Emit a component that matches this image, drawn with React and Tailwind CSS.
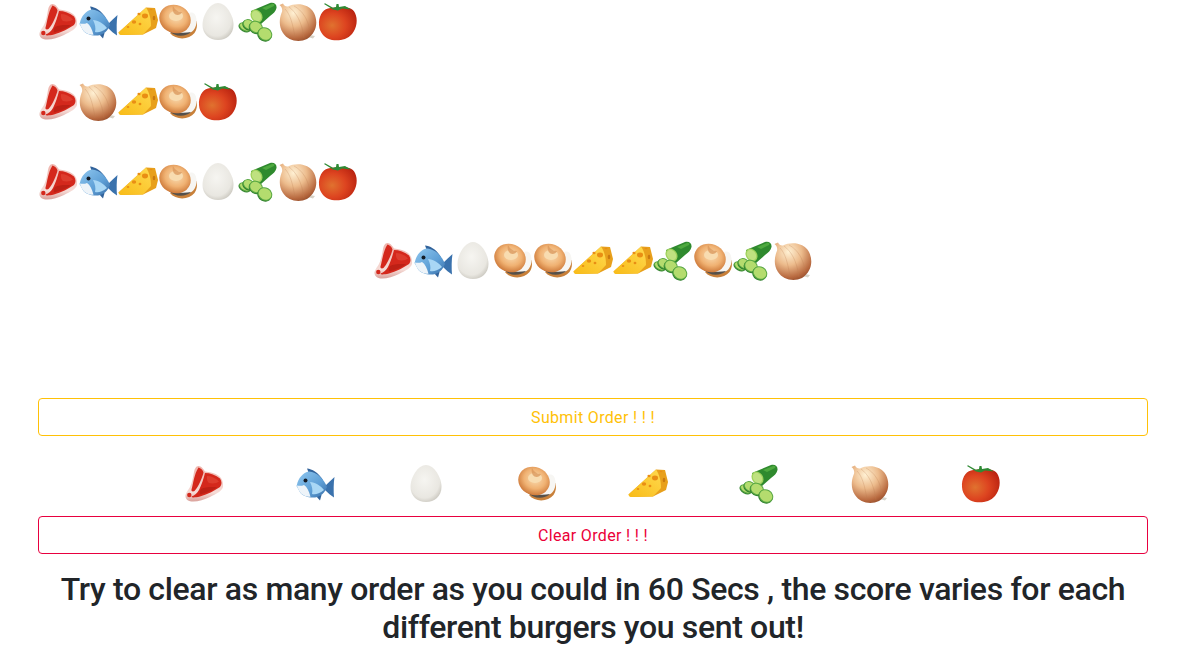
const Svg = ({ children }) => (
  <svg width="40" height="42" viewBox="0 0 40 42" className="block shrink-0">
    {children}
  </svg>
);

const Meat = () => (
  <Svg>
    <defs>
      <linearGradient id="fat" x1="0" y1="0" x2="0" y2="1">
        <stop offset="0" stopColor="#efb4ac" />
        <stop offset="0.75" stopColor="#f6dcd7" />
        <stop offset="1" stopColor="#d9a09a" />
      </linearGradient>
    </defs>
    <path
      d="M14.5 4C17 4 19.5 7 21 9.5C25 10 31 11 35 14C38 16.5 39.5 20 39 25C38 29 32 32 26 35C20 38 13 40 7.5 39.5C3.5 39 1 36.5 1.5 33C2 30 4.5 28 6 25C8 21 9 16 10 10C10.5 7 12 4 14.5 4Z"
      fill="url(#fat)"
    />
    <path d="M14.5 5.5C16.5 6 19 8 19.5 10.5C18.5 15 15 24 10.5 29C9 30 7 29.5 7.5 27.5C9 23 10 12 14.5 5.5Z" fill="#d4281c" />
    <path d="M21 11C26 11 32 13 36 16.5C38 19.5 38 22.5 36 25C31 28.5 24 32 16 34.5C11 35.5 8 36 7.5 34.5C11 33.5 13 31 15 28C17.5 23 19.5 17 21 11Z" fill="#d4281c" />
    <path d="M23 14C27 14 32 16 35 19.5C33 21.5 28 22 25 21C23.5 20 22.5 17 23 14Z" fill="#dd3d2e" />
    <path d="M17 27C21 25 29 24.5 33 25.5C28 29 22 31 16 32.5C15.5 31 16 28 17 27Z" fill="#bd2015" />
    <circle cx="5.3" cy="33" r="2.2" fill="#d4281c" />
  </Svg>
);

const Fish = () => (
  <Svg>
    <defs>
      <linearGradient id="fishBody" x1="0" y1="0" x2="1" y2="1">
        <stop offset="0" stopColor="#8fc7ef" />
        <stop offset="0.6" stopColor="#5e9fd6" />
        <stop offset="1" stopColor="#3a6fa8" />
      </linearGradient>
    </defs>
    <path d="M13 9L12 6.5C17 7 23 10 28 18L14 13Z" fill="#32639b" />
    <path d="M20 33L25 38.5L26.5 33Z" fill="#32639b" />
    <path d="M30 24C33 21 37 17.5 39.5 15C38.5 21 38.5 29 39 35.5C36 33.5 33 31 30 28Z" fill="#3a72ad" />
    <path d="M2 22.5C3 17 8 10 14 9.5C22 10 29 17 32 25C30 30 26 35 20 35.5C14 36 7 34 4.5 29.5C3.5 27 2 25 1.5 24Z" fill="url(#fishBody)" />
    <path d="M2 23.5C4 24 7 24 9 23C12 25 14 29 15.5 34.8C12 35 7 33.5 4.5 29.5C3.5 27 2 25 2 23.5Z" fill="#eef4f9" />
    <path d="M15 20C20 20 26 24 29 28C24 32 20 33 17 32C18 28 17 24 15 20Z" fill="#a9d7f5" />
    <circle cx="10.5" cy="18.5" r="2" fill="#141c26" />
  </Svg>
);

const Cheese = () => (
  <Svg>
    <defs>
      <linearGradient id="cheeseTop" x1="0" y1="1" x2="1" y2="0">
        <stop offset="0" stopColor="#f8bb18" />
        <stop offset="1" stopColor="#ffd94e" />
      </linearGradient>
    </defs>
    <path d="M0.5 32.5L28 7.5L37 8L40 20L38 28L25 34.5L3 35Z" fill="#e8a01c" />
    <path d="M0.5 32.5L28 7.5C31 12 33 18 33 26L25 34.5L3 35C1.5 35 0.5 33.5 0.5 32.5Z" fill="url(#cheeseTop)" />
    <ellipse cx="27" cy="16" rx="3" ry="2.4" fill="#e98e14" />
    <ellipse cx="21" cy="14" rx="1.6" ry="1.2" fill="#e98e14" />
    <ellipse cx="16" cy="22" rx="2.2" ry="1.8" fill="#e98e14" />
    <ellipse cx="22" cy="24" rx="1.4" ry="1.2" fill="#e98e14" />
    <ellipse cx="10" cy="27" rx="1.3" ry="1" fill="#e98e14" />
    <ellipse cx="36" cy="18" rx="1.3" ry="2.2" fill="#c97a10" />
    <ellipse cx="33" cy="9.5" rx="1.5" ry="0.8" fill="#e98e14" />
  </Svg>
);

const Bagel = () => (
  <Svg>
    <defs>
      <radialGradient id="bun" cx="0.5" cy="0.42" r="0.62">
        <stop offset="0" stopColor="#f9dcb2" />
        <stop offset="0.55" stopColor="#f0b273" />
        <stop offset="1" stopColor="#c87030" />
      </radialGradient>
    </defs>
    <path d="M12 33C18 40.5 31 40 36.5 33C39 29.5 39.5 25 38.5 21L24 30Z" fill="#c8803a" />
    <path d="M14 32C21 36.5 32 35 36 29.5C39 25.5 39.5 19 37 14.5C35 12 32 12 30 14L20 27Z" fill="#f7f6f3" />
    <path d="M10 30C16 37 27 37.5 33 32C26 33.5 18 33 10 30Z" fill="#55504a" />
    <ellipse cx="17" cy="19" rx="16" ry="14" transform="rotate(22 17 19)" fill="url(#bun)" />
    <ellipse cx="18" cy="16" rx="7" ry="5" fill="#f8dcb0" />
    <path d="M15 6C17 10 20 12 24 12C23 14.5 20 15.5 17.5 14.5C15 13 14 9 15 6Z" fill="#d9965a" fillOpacity="0.75" />
  </Svg>
);

const Egg = () => (
  <Svg>
    <defs>
      <radialGradient id="egg" cx="0.45" cy="0.4" r="0.7">
        <stop offset="0" stopColor="#f6f5f1" />
        <stop offset="0.7" stopColor="#e9e7e1" />
        <stop offset="1" stopColor="#bfbcb3" />
      </radialGradient>
    </defs>
    <path d="M20 3C28 3 35.5 15 35.5 25C35.5 34 28.5 40 20 40C11.5 40 4.5 34 4.5 25C4.5 15 12 3 20 3Z" fill="url(#egg)" />
  </Svg>
);

const Slice = ({ cx, cy, rx, ry }) => (
  <g>
    <ellipse cx={cx} cy={cy + 1} rx={rx} ry={ry} transform={`rotate(30 ${cx} ${cy})`} fill="#2f7f2c" />
    <ellipse cx={cx} cy={cy} rx={rx} ry={ry} transform={`rotate(30 ${cx} ${cy})`} fill="#5aa845" />
    <ellipse cx={cx} cy={cy} rx={rx - 1} ry={ry - 1} transform={`rotate(30 ${cx} ${cy})`} fill="#b4dc6e" />
  </g>
);

const Cucumber = () => (
  <Svg>
    <path d="M13 11L32 3C36 2 39 4 38.5 8C38 11 35 14 32 16L23 24C18 24 14 18 13 11Z" fill="#2f8a2e" />
    <path d="M24 8L34 4C36 3.5 37 4.5 36 6L28 10Z" fill="#4ea93f" />
    <ellipse cx="18.5" cy="16" rx="5.5" ry="7" transform="rotate(-35 18.5 16)" fill="#9fd25c" />
    <ellipse cx="18.5" cy="16" rx="4.2" ry="5.6" transform="rotate(-35 18.5 16)" fill="#bfe180" />
    <Slice cx={7} cy={27} rx={6.5} ry={4} />
    <Slice cx={11} cy={24.5} rx={6.5} ry={5} />
    <Slice cx={18} cy={27} rx={7} ry={6} />
    <Slice cx={27} cy={34} rx={7.5} ry={6.5} />
  </Svg>
);

const Onion = () => (
  <Svg>
    <defs>
      <radialGradient id="onion" cx="0.38" cy="0.25" r="0.85">
        <stop offset="0" stopColor="#fff1d4" />
        <stop offset="0.42" stopColor="#ecbb8c" />
        <stop offset="0.8" stopColor="#b8693f" />
        <stop offset="1" stopColor="#8a4526" />
      </radialGradient>
    </defs>
    <path d="M30 37L35 38.5L37 36L32 35Z" fill="#d6d2c8" />
    <path d="M1.5 5L5 3.5C6 5.5 8 7 10 6.5C18 2.5 31 3.5 36 13C40.5 22 38.5 33 29 39C21 43 10 41 5 33C1 27 1 20 3.5 13C5 10 4 7 1.5 5Z" fill="url(#onion)" />
    <path d="M7 9C12 14 15 24 17 38M11 7C18 12 24 22 26 38M16 6C24 10 31 20 32 33" stroke="#bd7d50" strokeOpacity="0.3" strokeWidth="0.9" fill="none" />
  </Svg>
);

const Tomato = () => (
  <Svg>
    <defs>
      <radialGradient id="tomato" cx="0.35" cy="0.55" r="0.72">
        <stop offset="0" stopColor="#e0722f" />
        <stop offset="0.5" stopColor="#dd4420" />
        <stop offset="1" stopColor="#b8210f" />
      </radialGradient>
    </defs>
    <path d="M19.5 7.5C26 6.5 34 7 37 13C40 19 39 28 34 34C29 40 21 41 14 40C7 38.5 1.5 33 1 25C0.5 17 4 10 10 8.5C13 7.5 16 7.5 19.5 7.5Z" fill="url(#tomato)" />
    <path d="M6 4L7 3.2L15 7.8L18 7L18.5 4L20.5 4L21 7L27 6L33 9.5L24 8.5L20 10.5L15 9.5Z" fill="#2f8a34" />
  </Svg>
);

const items = {
  meat: Meat,
  fish: Fish,
  cheese: Cheese,
  bagel: Bagel,
  egg: Egg,
  cucumber: Cucumber,
  onion: Onion,
  tomato: Tomato,
};

const orders = [
  ["meat", "fish", "cheese", "bagel", "egg", "cucumber", "onion", "tomato"],
  ["meat", "onion", "cheese", "bagel", "tomato"],
  ["meat", "fish", "cheese", "bagel", "egg", "cucumber", "onion", "tomato"],
];

const current = ["meat", "fish", "egg", "bagel", "bagel", "cheese", "cheese", "cucumber", "bagel", "cucumber", "onion"];

const picker = ["meat", "fish", "egg", "bagel", "cheese", "cucumber", "onion", "tomato"];

function Row({ names, className }) {
  return (
    <div className={className}>
      {names.map((name, i) => {
        const Icon = items[name];
        return <Icon key={i} />;
      })}
    </div>
  );
}

export default function App() {
  return (
    <div className="bg-white min-h-[669px] overflow-hidden font-['Roboto',sans-serif] text-[#212529]">
      <div className="w-[1110px] ml-[38px]">
        <Row names={orders[0]} className="flex h-20" />
        <Row names={orders[1]} className="flex h-20" />
        <Row names={orders[2]} className="flex h-[79px]" />
        <Row names={current} className="flex justify-center h-[159px]" />
        <button className="block w-full h-[38px] pt-px rounded border border-[#ffc107] text-[#ffc107] text-base tracking-[0.33px]">
          Submit Order ! ! !
        </button>
        <div className="flex justify-center mt-[26px] h-[54px]">
          {picker.map((name) => {
            const Icon = items[name];
            return (
              <div key={name} className="w-[111px] pr-px flex justify-center">
                <Icon />
              </div>
            );
          })}
        </div>
        <button className="block w-full h-[38px] pt-px rounded border border-[#e8003f] text-[#eb0038] text-base tracking-[0.33px]">
          Clear Order ! ! !
        </button>
        <h2 className="mt-4 text-center text-[32px] leading-[38px] font-medium tracking-[-0.35px]">
          Try to clear as many order as you could in 60 Secs , the score varies for each different burgers you sent out!
        </h2>
      </div>
    </div>
  );
}
